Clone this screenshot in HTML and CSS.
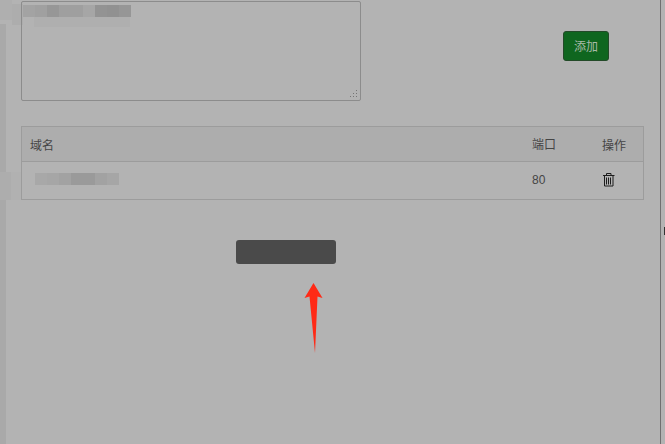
FILE: index.html
```html
<!DOCTYPE html>
<html lang="en">
<head>
    <meta charset="UTF-8">
    <meta name="viewport" content="width=device-width, initial-scale=1.0">
    <title>域名</title>
    <link rel="stylesheet" href="styles.css">
</head>
<body>

    <div class="side-strip"></div>
    <div class="smear smear-a"></div>
    <div class="smear smear-b"></div>
    <div class="smear smear-c"></div>
    <div class="smear smear-d"></div>

    <div class="page">
        <div class="form-row">
            <div class="textarea-box">
                <div class="blur-top">
                    <i style="width:12px;background:#a3a3a3"></i><i style="width:12px;background:#a0a0a0"></i><i style="width:12px;background:#979797"></i><i style="width:24px;background:#9f9f9f"></i><i style="width:12px;background:#a6a6a6"></i><i style="width:12px;background:#939393"></i><i style="width:12px;background:#919191"></i><i style="width:12px;background:#969696"></i>
                </div>
                <div class="blur-under"></div>
                <svg class="grip" width="9" height="9" viewBox="0 0 9 9"><path d="M7 1h1v1H7zM4 4h1v1H4zM7 4h1v1H7zM1 7h1v1H1zM4 7h1v1H4zM7 7h1v1H7z" fill="#757575"/></svg>
            </div>
            <button class="add-btn">添加</button>
        </div>

        <div class="domain-table">
            <div class="row head">
                <div class="col-name">域名</div>
                <div class="col-port">端口</div>
                <div class="col-op">操作</div>
            </div>
            <div class="row body">
                <div class="col-name">
                    <div class="blur-cell">
                        <i style="width:12px;background:#a8a8a8"></i><i style="width:12px;background:#a6a6a6"></i><i style="width:12px;background:#a2a2a2"></i><i style="width:24px;background:#9a9a9a"></i><i style="width:12px;background:#a2a2a2"></i><i style="width:12px;background:#a6a6a6"></i>
                    </div>
                </div>
                <div class="col-port">80</div>
                <div class="col-op">
                    <svg class="trash" width="12" height="14" viewBox="0 0 12 14" fill="none" stroke="#1c1c1c" stroke-width="1">
                        <path d="M0 2.500h11.500M3.500 2.500V0.500h4.500v2M1.500 2.500v10.500h8.500v-10.500M3.500 4.500v7M5.500 4.500v7M7.500 4.500v7"/>
                    </svg>
                </div>
            </div>
        </div>

        <div class="submit-row">
            <button class="submit-btn"></button>
        </div>
    </div>

    <div class="scroll-line"></div>
    <div class="scroll-dots"></div>

    <svg class="arrow" width="20" height="72" viewBox="0 0 20 72"><path d="M9.500 0L18.500 15L13.500 13.500L11 70L5.500 13.500L0.500 15Z" fill="#ff2a16"/></svg>

</body>
</html>
```

FILE: styles.css
```css
html, body { margin: 0; height: 100%; }
body { background: #b3b3b3; font-family: "Liberation Sans", "Noto Sans CJK SC", sans-serif; font-size: 12px; color: #454545; overflow: hidden; position: relative; }
.side-strip { position: absolute; left: 0; top: 24px; bottom: 0; width: 6px; background: #a9a9a9; }
.smear { position: absolute; }
.smear-a { left: 0; top: 0; width: 12px; height: 20px; background: #afafaf; }
.smear-b { left: 12px; top: 4px; width: 11px; height: 21px; background: #adadad; }
.smear-c { left: 0; top: 172px; width: 11px; height: 28px; background: #adadad; }
.smear-d { left: 11px; top: 172px; width: 10px; height: 28px; background: #b1b1b1; }
.page { padding: 1px 21px 0; width: 623px; }
.form-row { display: flex; align-items: flex-start; }
.textarea-box { position: relative; width: 338px; height: 98px; border: 1px solid #8c8c8c; border-radius: 2px; }
.blur-top { position: absolute; left: 1px; top: 3px; display: flex; height: 12px; }
.blur-top i, .blur-cell i { display: block; height: 100%; }
.blur-under { position: absolute; left: 12px; top: 15px; width: 96px; height: 10px; background: #afafaf; }
.grip { position: absolute; right: 2px; bottom: 2px; }
.add-btn { margin: 30px 0 0 202px; width: 46px; height: 30px; background: #0f661f; border: 1px solid #234a28; border-radius: 3px; color: #a9baa9; font: 12px "Liberation Sans", "Noto Sans CJK SC", sans-serif; padding: 0 0 2px; }
.domain-table { margin-top: 25px; border: 1px solid #9c9c9c; width: 621px; }
.row { display: flex; align-items: center; padding-left: 8px; }
.head { height: 34px; background: #adadad; border-bottom: 1px solid #9c9c9c; }
.body { height: 37px; }
.col-name { flex: 1; }
.col-port { width: 70px; padding-bottom: 1px; }
.col-op { width: 41px; }
.blur-cell { display: flex; height: 12px; margin: -3px 0 0 5px; }
.trash { display: block; margin: -2px 0 0 1px; }
.submit-row { margin-top: 40px; padding-left: 215px; }
.submit-btn { display: block; width: 100px; height: 24px; background: #4a4a4a; border: none; border-radius: 3px; padding: 0; }
.scroll-line { position: absolute; left: 660px; top: 0; bottom: 0; width: 1px; background: #707070; }
.scroll-dots { position: absolute; left: 664px; top: 227px; width: 1px; height: 8px; background: #333; }
.arrow { position: absolute; left: 304px; top: 283px; }
```
